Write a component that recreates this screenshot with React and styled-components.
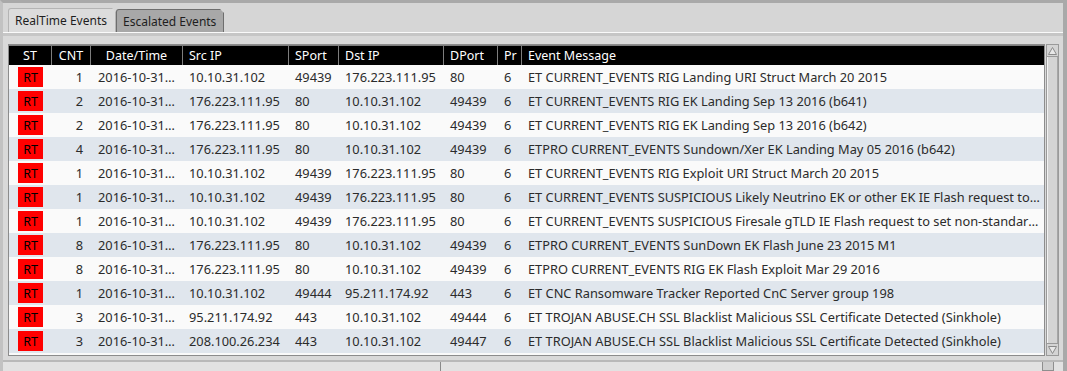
import React from "react";
import styled, { createGlobalStyle } from "styled-components";

const rows = [
  { cnt: 1, time: "2016-10-31 13:42:07", src: "10.10.31.102", sport: "49439", dst: "176.223.111.95", dport: "80", pr: 6, msg: "ET CURRENT_EVENTS RIG Landing URI Struct March 20 2015" },
  { cnt: 2, time: "2016-10-31 13:42:08", src: "176.223.111.95", sport: "80", dst: "10.10.31.102", dport: "49439", pr: 6, msg: "ET CURRENT_EVENTS RIG EK Landing Sep 13 2016 (b641)" },
  { cnt: 2, time: "2016-10-31 13:42:08", src: "176.223.111.95", sport: "80", dst: "10.10.31.102", dport: "49439", pr: 6, msg: "ET CURRENT_EVENTS RIG EK Landing Sep 13 2016 (b642)" },
  { cnt: 4, time: "2016-10-31 13:42:08", src: "176.223.111.95", sport: "80", dst: "10.10.31.102", dport: "49439", pr: 6, msg: "ETPRO CURRENT_EVENTS Sundown/Xer EK Landing May 05 2016 (b642)" },
  { cnt: 1, time: "2016-10-31 13:42:09", src: "10.10.31.102", sport: "49439", dst: "176.223.111.95", dport: "80", pr: 6, msg: "ET CURRENT_EVENTS RIG Exploit URI Struct March 20 2015" },
  { cnt: 1, time: "2016-10-31 13:42:09", src: "10.10.31.102", sport: "49439", dst: "176.223.111.95", dport: "80", pr: 6, msg: "ET CURRENT_EVENTS SUSPICIOUS Likely Neutrino EK or other EK IE Flash request to DotCom Jan 04 2016" },
  { cnt: 1, time: "2016-10-31 13:42:09", src: "10.10.31.102", sport: "49439", dst: "176.223.111.95", dport: "80", pr: 6, msg: "ET CURRENT_EVENTS SUSPICIOUS Firesale gTLD IE Flash request to set non-standard filename" },
  { cnt: 8, time: "2016-10-31 13:42:10", src: "176.223.111.95", sport: "80", dst: "10.10.31.102", dport: "49439", pr: 6, msg: "ETPRO CURRENT_EVENTS SunDown EK Flash June 23 2015 M1" },
  { cnt: 8, time: "2016-10-31 13:42:10", src: "176.223.111.95", sport: "80", dst: "10.10.31.102", dport: "49439", pr: 6, msg: "ETPRO CURRENT_EVENTS RIG EK Flash Exploit Mar 29 2016" },
  { cnt: 1, time: "2016-10-31 13:42:14", src: "10.10.31.102", sport: "49444", dst: "95.211.174.92", dport: "443", pr: 6, msg: "ET CNC Ransomware Tracker Reported CnC Server group 198" },
  { cnt: 3, time: "2016-10-31 13:42:14", src: "95.211.174.92", sport: "443", dst: "10.10.31.102", dport: "49444", pr: 6, msg: "ET TROJAN ABUSE.CH SSL Blacklist Malicious SSL Certificate Detected (Sinkhole)" },
  { cnt: 3, time: "2016-10-31 13:42:15", src: "208.100.26.234", sport: "443", dst: "10.10.31.102", dport: "49447", pr: 6, msg: "ET TROJAN ABUSE.CH SSL Blacklist Malicious SSL Certificate Detected (Sinkhole)" },
];

// column widths measured off the event view
const COLS = "42px 39px 92px 106px 50px 105px 54px 24px 1fr";

const GlobalStyle = createGlobalStyle`
  html, body { margin: 0; padding: 0; background: #a9a9a9; }
  body { font-family: "Noto Sans", "DejaVu Sans", sans-serif; font-size: 12.5px; }
`;

const Window = styled.div`
  width: 1067px;
  height: 371px;
  box-sizing: border-box;
  border-top: 3px solid #a9a9a9;
  border-left: 3px solid #c2c2c2;
  border-right: 4px solid #a9a9a9;
  background: #d9d9d9;
  display: flex;
  flex-direction: column;
  overflow: hidden;
`;

const TabBar = styled.div`
  height: 30px;
  box-sizing: border-box;
  display: flex;
  align-items: flex-end;
  padding-left: 5px;
  background: #d6d6d6;
  border-bottom: 1px solid #fafafa;
`;

const Tab = styled.div`
  width: 108px;
  height: ${(p) => (p.$active ? 24 : 23)}px;
  box-sizing: border-box;
  padding: 0 0 0 6px;
  display: flex;
  align-items: center;
  color: #1e1e1e;
  font-size: 12px;
  white-space: nowrap;
  background: ${(p) => (p.$active ? "#dcdcdc" : "#a8a8a8")};
  border: 1px solid ${(p) => (p.$active ? "#b4b4b4" : "#6e6e6e")};
  border-bottom: none;
  border-top-left-radius: 3px;
  clip-path: polygon(0 0, calc(100% - 4px) 0, 100% 4px, 100% 100%, 0 100%);
`;

const Shade = styled.div`
  height: 3px;
  background: #c6c6c6;
`;

const Pane = styled.div`
  flex: 1;
  display: flex;
  flex-direction: column;
  padding: 8px 4px 0 5px;
  min-height: 0;
`;

const TableArea = styled.div`
  display: flex;
  gap: 1px;
  height: 312px;
`;

const Frame = styled.div`
  flex: 1;
  border: 1px solid #8c8c8c;
  background: #fafafa;
  overflow: hidden;
`;

const Row = styled.div`
  display: grid;
  grid-template-columns: ${COLS};
  height: ${(p) => (p.$head ? 20 : 24)}px;
  font-size: ${(p) => (p.$head ? 12.5 : 12.8)}px;
  background: ${(p) => (p.$head ? "#000" : p.$alt ? "#e0e6ed" : "#fafafa")};
  color: ${(p) => (p.$head ? "#fff" : "#2b2b2b")};
`;

const HeadCell = styled.div`
  display: flex;
  align-items: center;
  justify-content: ${(p) => (p.$center ? "center" : "flex-start")};
  padding-left: ${(p) => (p.$center ? 0 : 6)}px;
  border-left: ${(p) => (p.$first ? "none" : "1px solid #7d7d7d")};
  border-top: 1px solid #7d7d7d;
  white-space: nowrap;
  overflow: hidden;
`;

const Cell = styled.div`
  display: flex;
  align-items: center;
  justify-content: ${(p) => (p.$right ? "flex-end" : "flex-start")};
  padding: 0 ${(p) => (p.$right ? 7 : 4)}px 0 ${(p) => (p.$right ? 0 : 7)}px;
  white-space: nowrap;
  overflow: hidden;
  min-width: 0;
`;

const DateCell = styled(Cell)`
  padding: 0 4px 0 8px;
`;

const Text = styled.span`
  overflow: hidden;
  text-overflow: ellipsis;
  white-space: nowrap;
`;

const StCell = styled.div`
  display: flex;
  align-items: center;
  justify-content: center;
  padding-left: 1px;
`;

const Badge = styled.div`
  width: 25px;
  height: 20px;
  background: #ff0000;
  color: #000;
  font-size: 12.5px;
  display: flex;
  align-items: center;
  justify-content: center;
`;

const ScrollBar = styled.div`
  width: 13px;
  display: flex;
  flex-direction: column;
  border: 1px solid #9a9a9a;
  box-sizing: border-box;
  background: #d4d4d4;
`;

const Arrow = styled.div`
  height: 11px;
  display: flex;
  align-items: center;
  justify-content: center;
  border-bottom: ${(p) => (p.$up ? "1px solid #9a9a9a" : "none")};
  border-top: ${(p) => (p.$up ? "none" : "1px solid #9a9a9a")};
`;

const Track = styled.div`
  flex: 1;
  border-left: 1px solid #f2f2f2;
  border-right: 1px solid #a6a6a6;
`;

const BottomBar = styled.div`
  margin-top: 4px;
  height: 9px;
  border-top: 2px solid #b9b9b9;
  background: #e2e2e2;
  display: flex;
  margin-left: -5px;
  margin-right: -4px;
`;

const BottomLeft = styled.div`
  width: 437px;
  border-right: 1px solid #8a8a8a;
`;

const BottomRight = styled.div`
  flex: 1;
  display: flex;
  justify-content: flex-end;
  padding-right: 9px;
`;

const Grip = styled.div`
  width: 10px;
  height: 8px;
  background: #cfcfcf;
  border: 1px solid #8e8e8e;
  border-top: none;
`;

const headers = [
  { t: "ST", c: true },
  { t: "CNT", c: true },
  { t: "Date/Time", c: true },
  { t: "Src IP" },
  { t: "SPort" },
  { t: "Dst IP" },
  { t: "DPort" },
  { t: "Pr" },
  { t: "Event Message" },
];

function ArrowIcon({ up }) {
  return (
    <svg width="9" height="8" viewBox="0 0 9 8">
      <polygon
        points={up ? "4.5,0.5 8.5,7.5 0.5,7.5" : "0.5,0.5 8.5,0.5 4.5,7.5"}
        fill="#e8e8e8"
        stroke="#8a8a8a"
        strokeWidth="1"
      />
    </svg>
  );
}

export default function App() {
  return (
    <>
      <GlobalStyle />
      <Window>
        <TabBar>
          <Tab $active>RealTime Events</Tab>
          <Tab>Escalated Events</Tab>
        </TabBar>
        <Shade />
        <Pane>
          <TableArea>
            <Frame>
              <Row $head>
                {headers.map((h, i) => (
                  <HeadCell key={h.t} $center={h.c} $first={i === 0}>
                    {h.t}
                  </HeadCell>
                ))}
              </Row>
              {rows.map((r, i) => (
                <Row key={i} $alt={i % 2 === 1}>
                  <StCell>
                    <Badge>RT</Badge>
                  </StCell>
                  <Cell $right>{r.cnt}</Cell>
                  <DateCell><Text>{r.time}</Text></DateCell>
                  <Cell>{r.src}</Cell>
                  <Cell>{r.sport}</Cell>
                  <Cell>{r.dst}</Cell>
                  <Cell>{r.dport}</Cell>
                  <Cell>{r.pr}</Cell>
                  <Cell><Text>{r.msg}</Text></Cell>
                </Row>
              ))}
            </Frame>
            <ScrollBar>
              <Arrow $up><ArrowIcon up /></Arrow>
              <Track />
              <Arrow><ArrowIcon /></Arrow>
            </ScrollBar>
          </TableArea>
          <BottomBar>
            <BottomLeft />
            <BottomRight>
              <Grip />
            </BottomRight>
          </BottomBar>
        </Pane>
      </Window>
    </>
  );
}
